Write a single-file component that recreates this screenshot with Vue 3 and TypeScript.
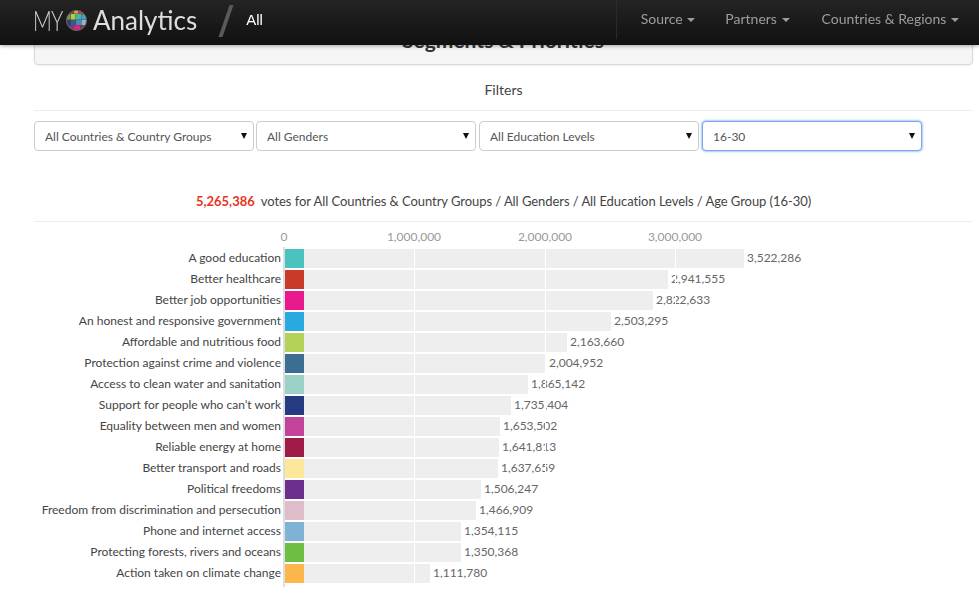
<script setup lang="ts">
interface Row { label: string; value: number; color: string }

const SCALE = 130.2 / 1000000
const GRID_SCALE = 130.4 / 1000000

const rows: Row[] = [
  { label: 'A good education', value: 3522286, color: '#4bc2bd' },
  { label: 'Better healthcare', value: 2941555, color: '#c93a28' },
  { label: 'Better job opportunities', value: 2822633, color: '#e7198c' },
  { label: 'An honest and responsive government', value: 2503295, color: '#29a9e1' },
  { label: 'Affordable and nutritious food', value: 2163660, color: '#b3d257' },
  { label: 'Protection against crime and violence', value: 2004952, color: '#3c6e94' },
  { label: 'Access to clean water and sanitation', value: 1865142, color: '#9ad2c9' },
  { label: 'Support for people who can’t work', value: 1735404, color: '#263a82' },
  { label: 'Equality between men and women', value: 1653502, color: '#c3439a' },
  { label: 'Reliable energy at home', value: 1641813, color: '#9e1c46' },
  { label: 'Better transport and roads', value: 1637659, color: '#fde798' },
  { label: 'Political freedoms', value: 1506247, color: '#6d2f8e' },
  { label: 'Freedom from discrimination and persecution', value: 1466909, color: '#dfbcc9' },
  { label: 'Phone and internet access', value: 1354115, color: '#7fb3d6' },
  { label: 'Protecting forests, rivers and oceans', value: 1350368, color: '#6fbe44' },
  { label: 'Action taken on climate change', value: 1111780, color: '#fdb64a' },
]

const ticks = [1000000, 2000000, 3000000]
const filters = [
  'All Countries & Country Groups',
  'All Genders',
  'All Education Levels',
  '16-30',
]
const fmt = (n: number) => n.toLocaleString('en-US')
const px = (n: number) => `${Math.round(n * SCALE)}px`
const gridPx = (n: number) => `${Math.round(n * GRID_SCALE)}px`
</script>

<template>
  <header class="navbar">
    <a class="brand">
      <span class="my">MY</span>
      <svg class="globe" width="21" height="21" viewBox="0 0 21 21" aria-hidden="true">
        <defs><clipPath id="g"><circle cx="10.5" cy="10.5" r="10" /></clipPath></defs>
        <g clip-path="url(#g)">
          <rect width="21" height="21" fill="#4a4a4a" />
          <rect x="3" y="0" width="4.5" height="4.5" fill="#7a4038" />
          <rect x="8" y="0" width="4" height="3.5" fill="#e9a13b" />
          <rect x="12.5" y="0" width="4.5" height="4" fill="#c9402e" />
          <rect x="1" y="4.5" width="3.5" height="5" fill="#7c9a3f" />
          <rect x="5" y="4" width="4.5" height="5.5" fill="#a9cf4f" />
          <rect x="10" y="4" width="5" height="5.5" fill="#41b6b0" />
          <rect x="15.5" y="4.5" width="4.5" height="5" fill="#3aa5d8" />
          <rect x="1" y="10" width="3.5" height="5" fill="#2b3b80" />
          <rect x="5" y="10" width="4.5" height="5" fill="#2e5f88" />
          <rect x="10" y="10" width="5" height="5" fill="#4d88b0" />
          <rect x="15.5" y="10" width="4.5" height="5" fill="#8fb9c9" />
          <rect x="3" y="15.5" width="4.5" height="4" fill="#8e2f7f" />
          <rect x="8" y="15.5" width="6" height="4" fill="#e0208c" />
          <rect x="14.5" y="15.5" width="3.5" height="4" fill="#a02a5a" />
        </g>
        <circle cx="10.5" cy="10.5" r="10" fill="none" stroke="#6e6e6e" stroke-width="1" />
      </svg>
      <span class="analytics">Analytics</span>
      <span class="slash"></span>
      <span class="crumb">All</span>
    </a>
    <nav class="nav">
      <a class="nav-item">Source <i class="caret"></i></a>
      <a class="nav-item">Partners <i class="caret"></i></a>
      <a class="nav-item">Countries &amp; Regions <i class="caret"></i></a>
    </nav>
  </header>

  <main class="page">
    <section class="panel"><h2>Segments &amp; Priorities</h2></section>

    <h3 class="filters-title">Filters</h3>
    <div class="filters">
      <div v-for="(f, i) in filters" :key="f" class="select-wrap">
        <select class="select" :class="{ focus: i === 3 }">
          <option>{{ f }}</option>
        </select>
      </div>
    </div>

    <p class="summary">
      <b>5,265,386</b><span>votes for All Countries &amp; Country Groups / All Genders / All Education Levels / Age Group (16-30)</span>
    </p>

    <div class="chart">
      <div class="axis">
        <span class="tick zero">0</span>
        <span v-for="t in ticks" :key="t" class="tick" :style="{ left: gridPx(t) }">{{ fmt(t) }}</span>
      </div>
      <div class="body">
        <div v-for="r in rows" :key="r.label" class="row">
          <span class="label">{{ r.label }}</span>
          <div class="bar" :style="{ width: px(r.value) }">
            <span class="swatch" :style="{ background: r.color }"></span>
          </div>
          <span class="value">{{ fmt(r.value) }}</span>
        </div>
        <span v-for="t in ticks" :key="t" class="grid" :style="{ left: gridPx(t) }"></span>
      </div>
    </div>
  </main>
</template>

<style scoped>
.navbar {
  position: fixed;
  top: 0;
  left: 0;
  right: 0;
  height: 45px;
  z-index: 10;
  display: flex;
  justify-content: space-between;
  background: linear-gradient(#242424, #101010);
  box-shadow: 0 1px 4px rgba(0, 0, 0, 0.35);
  font-family: Lato, sans-serif;
}
.brand {
  display: flex;
  align-items: center;
  padding-left: 33px;
}
.my {
  display: inline-block;
  width: 33px;
  font-size: 28px;
  font-weight: 300;
  color: #ccc;
  letter-spacing: -1px;
  margin-top: -5px;
  transform: scaleX(0.74);
  transform-origin: left center;
  white-space: nowrap;
}
.globe {
  margin: -5px 0 0 0;
}
.analytics {
  font-size: 26px;
  font-weight: 400;
  color: #ddd;
  margin: -5px 0 0 6px;
}
.slash {
  width: 4px;
  height: 32px;
  margin: -4px 0 0 27px;
  background: #5a5a5a;
  transform: skewX(-19deg);
}
.crumb {
  font-family: "Liberation Sans", sans-serif;
  font-size: 15px;
  color: #fff;
  margin: -7px 0 0 18px;
}
.nav {
  display: flex;
  align-items: center;
  height: 39px;
  padding-right: 20px;
  border-left: 1px solid #2b2b2b;
}
.nav-item {
  margin: -2px 0 0 30px;
  font-size: 14px;
  color: #9d9d9d;
}
.nav-item:first-child {
  margin-left: 24px;
}
.nav-item:last-child {
  margin-left: 32px;
}
.caret {
  display: inline-block;
  width: 0;
  height: 0;
  margin-left: 1px;
  vertical-align: middle;
  border-top: 4px solid #9d9d9d;
  border-left: 4px solid transparent;
  border-right: 4px solid transparent;
}
.page {
  padding: 20px 6px 0 34px;
  font-family: Lato, sans-serif;
  color: #444;
}
.panel {
  height: 45px;
  box-sizing: border-box;
  background: #f5f5f5;
  border: 1px solid #d8d8d8;
  border-radius: 4px;
  box-shadow: 0 1px 3px rgba(0, 0, 0, 0.06);
  text-align: center;
}
.panel h2 {
  margin: 7px 0 0 -1px;
  font-size: 21px;
  line-height: 24px;
  font-weight: 700;
  color: #333;
}
.filters-title {
  margin: 0;
  height: 46px;
  padding-top: 16px;
  box-sizing: border-box;
  border-bottom: 1px solid #eee;
  font-size: 14px;
  line-height: 17px;
  font-weight: 400;
  text-align: center;
  color: #444;
}
.filters {
  display: flex;
  gap: 2px;
  margin-top: 10px;
}
.select-wrap {
  position: relative;
  width: 220px;
  height: 30px;
}
.select-wrap:nth-child(n + 3) {
  margin-left: 1px;
}
.select-wrap::after {
  content: "";
  position: absolute;
  top: 12px;
  right: 7px;
  border-top: 6px solid #111;
  border-left: 3px solid transparent;
  border-right: 3px solid transparent;
  pointer-events: none;
}
.select {
  display: block;
  appearance: none;
  width: 100%;
  height: 30px;
  padding: 0 10px;
  background-color: #fff;
  border: 1px solid #ccc;
  border-radius: 4px;
  font-family: Lato, sans-serif;
  font-size: 12px;
  color: #555;
  outline: none;
}
.select.focus {
  border-color: #7aa4ee;
  box-shadow: 0 0 2px 1px rgba(122, 164, 238, 0.6);
}
.summary {
  margin: 41px 0 0;
  height: 30px;
  padding-top: 1px;
  box-sizing: border-box;
  border-bottom: 1px solid #eee;
  text-align: center;
  font-size: 13px;
  line-height: 17px;
  letter-spacing: -0.06px;
  color: #444;
}
.summary b {
  color: #e8331c;
  font-weight: 700;
  margin-right: 6px;
  letter-spacing: 0;
}
.chart {
  margin-top: 7px;
}
.axis {
  position: relative;
  height: 18px;
  margin-left: 250px;
  font-size: 12px;
  line-height: 15px;
  color: #999;
}
.tick {
  position: absolute;
  top: 0;
  transform: translateX(-50%);
}
.tick.zero {
  left: 0;
}
.body {
  position: relative;
  padding: 2px 0;
  background: linear-gradient(#ddd, #ddd) 249px 0 / 2px 100% no-repeat;
}
.row {
  display: flex;
  align-items: center;
  height: 19px;
  margin-bottom: 2px;
}
.label {
  width: 247px;
  margin: -2px 4px 0 0;
  flex: none;
  text-align: right;
  font-size: 12px;
  white-space: nowrap;
  color: #444;
}
.bar {
  height: 100%;
  background: #eee;
  flex: none;
}
.swatch {
  display: block;
  width: 19px;
  height: 100%;
}
.value {
  margin: -2px 0 0 3px;
  font-size: 12px;
  color: #666;
}
.grid {
  position: absolute;
  top: 2px;
  bottom: 4px;
  width: 1px;
  margin-left: 250px;
  background: #fff;
}
</style>

<style>
html, body {
  margin: 0;
  background: #fff;
  overflow: hidden;
}
</style>
